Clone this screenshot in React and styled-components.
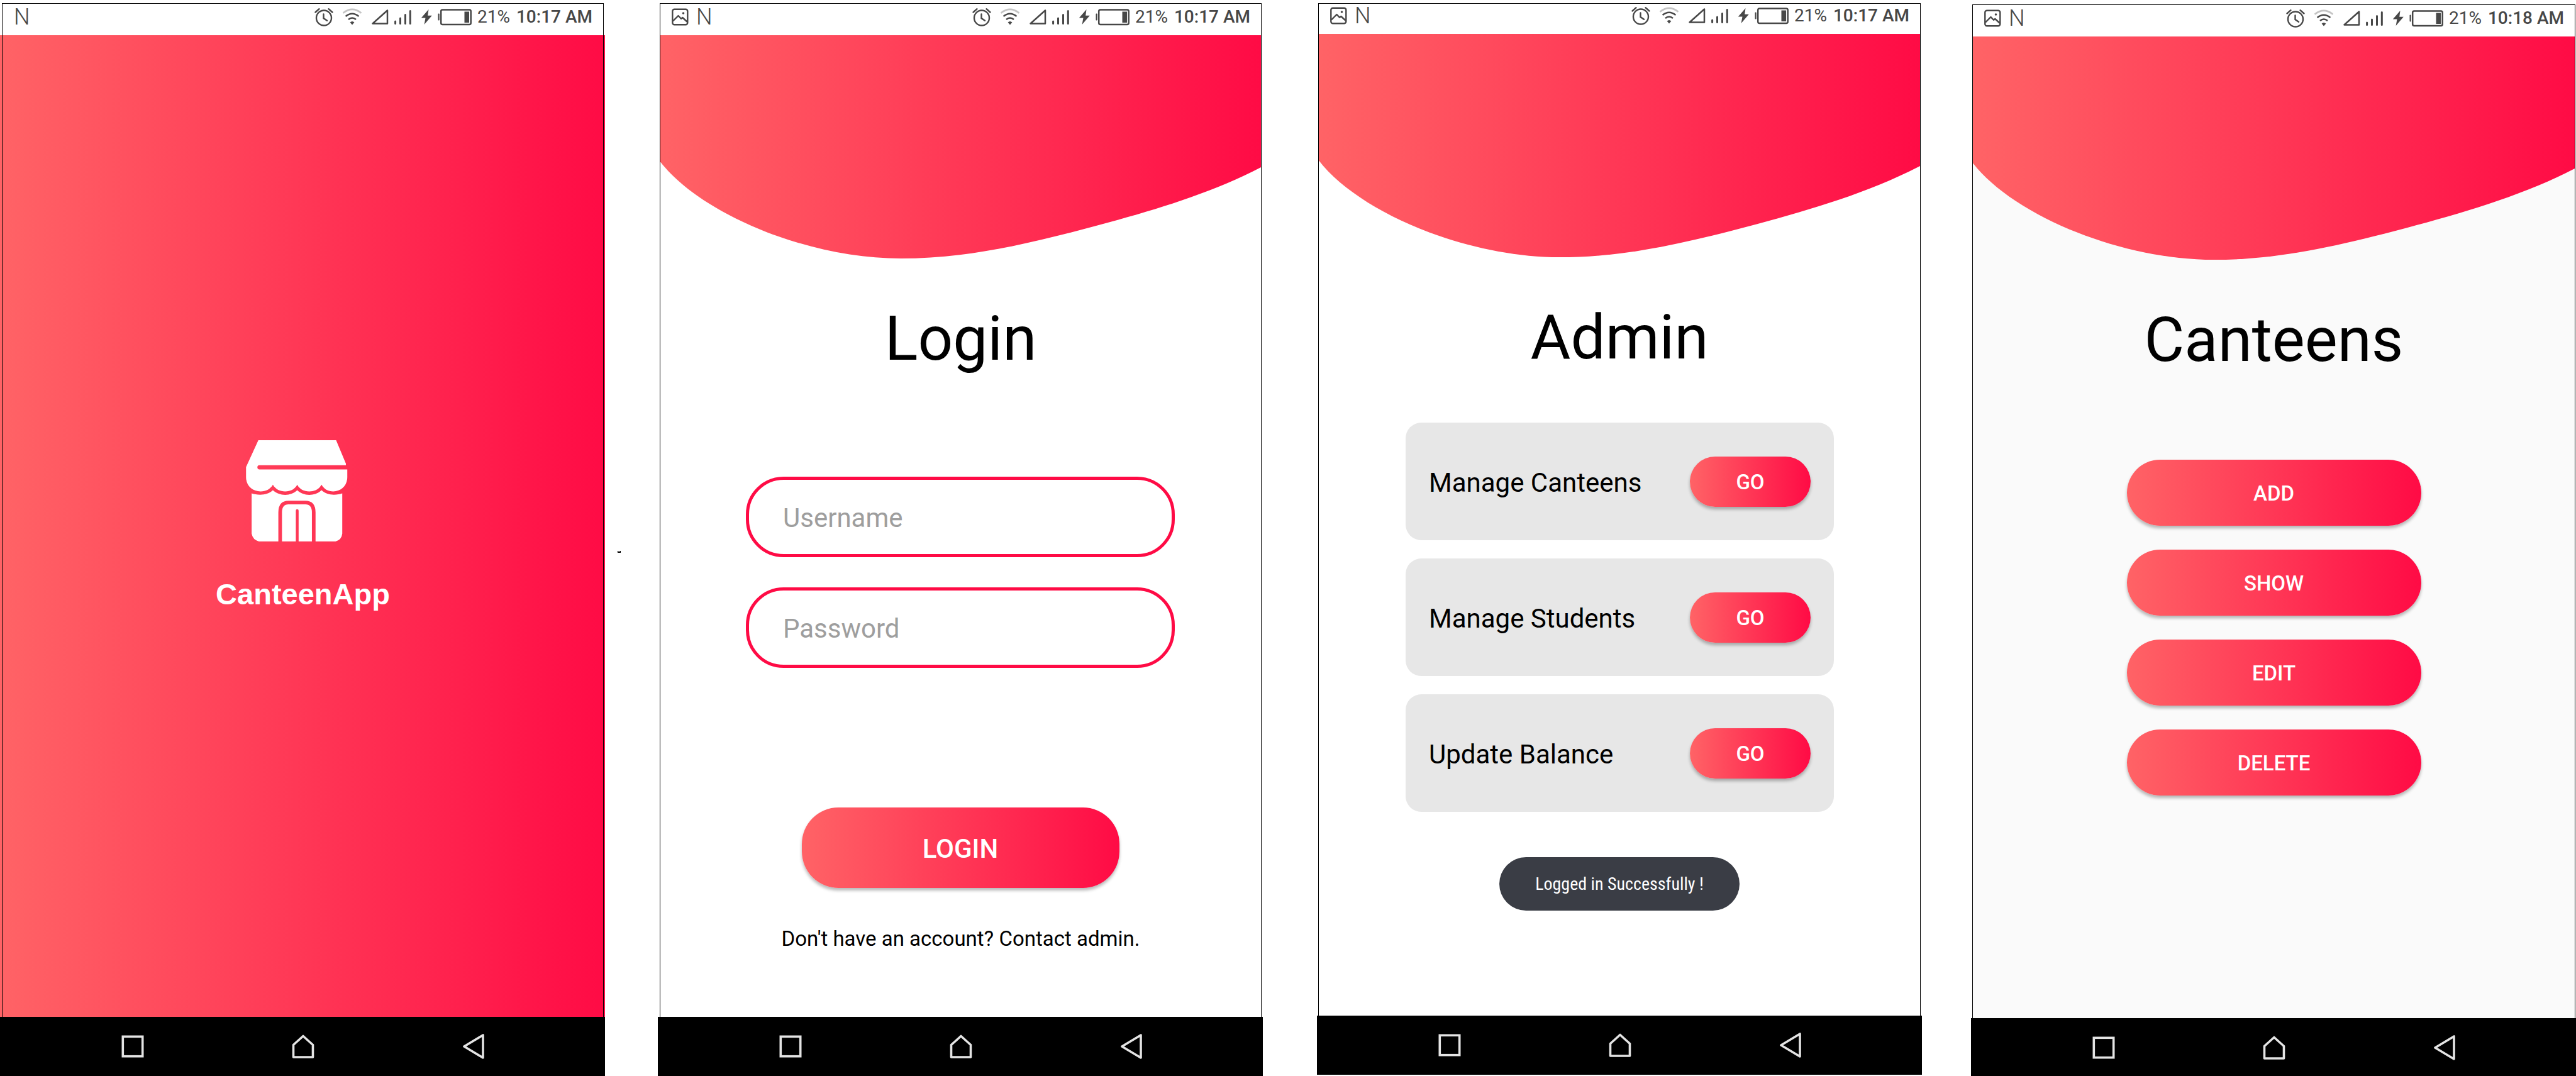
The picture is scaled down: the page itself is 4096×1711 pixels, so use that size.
import React from 'react';
import styled, { createGlobalStyle } from 'styled-components';

const coral = '#ff6366';
const crimson = '#ff0b45';
const ink = '#474747';
const brandGradient = `linear-gradient(90deg, ${coral}, ${crimson})`;

const GlobalStyle = createGlobalStyle`
  *, *::before, *::after { box-sizing: border-box; }
  body {
    margin: 0;
    background: #fff;
    font-family: Roboto, "Noto Sans", sans-serif;
    color: #000;
  }
  button, input { font-family: inherit; }
`;

const Board = styled.main`
  display: flex;
  min-height: 100vh;
`;

const Gutter = styled.div`
  flex: 0 0 ${(p) => p.$width}px;
  display: flex;
  align-items: center;
  padding: 44px 0 0 20px;
`;

const Speck = styled.span`
  width: 5px;
  height: 3px;
  border: 1px solid #000;
`;

const Phone = styled.section`
  flex: 1 1 0;
  min-width: 0;
  display: flex;
  flex-direction: column;
  padding-top: ${(p) => p.$top || 5}px;
  padding-bottom: ${(p) => p.$bottom || 0}px;
  background: ${(p) => (p.$splash ? `${brandGradient} 0 56px no-repeat` : 'none')};
`;

const Frame = styled.div`
  flex: 1;
  display: flex;
  flex-direction: column;
  margin: 0 ${(p) => p.$right || 2}px 0 ${(p) => p.$left || 3}px;
  border: 1px solid #000;
  border-bottom: 0;
`;

const StatusBar = styled.header`
  height: ${(p) => p.$height || 50}px;
  padding: 0 17px 12px 18px;
  display: flex;
  align-items: flex-end;
  justify-content: space-between;
  color: ${ink};
`;

const StatusGroup = styled.div`
  display: flex;
  align-items: center;
  gap: ${(p) => p.$gap}px;
  height: 34px;
  svg { display: block; flex: none; }
`;

const Carrier = styled.span`
  font-size: 36px;
  font-weight: 300;
  line-height: 34px;
`;

const StatusText = styled.span`
  font-size: 28px;
  line-height: 34px;
  font-weight: ${(p) => (p.$strong ? 500 : 400)};
`;

const Screen = styled.div`
  flex: 1;
  display: flex;
  flex-direction: column;
  align-items: center;
  background: ${(p) => p.$background || 'transparent'};
`;

const SplashBody = styled(Screen)`
  justify-content: center;
  gap: 56px;
`;

const BrandName = styled.h1`
  margin: 0;
  font-family: "Liberation Sans", Arial, sans-serif;
  font-size: 47px;
  line-height: 56px;
  font-weight: 700;
  color: #fff;
`;

const WaveArt = styled.svg`
  display: block;
  width: 100%;
  height: 356px;
`;

const Title = styled.h1`
  margin: 69px 0 0;
  font-size: 98px;
  line-height: 116px;
  font-weight: 400;
`;

const Form = styled.form`
  align-self: stretch;
  display: flex;
  flex-direction: column;
  align-items: center;
  padding: 161px 137px 0 136px;
`;

const Fields = styled.div`
  align-self: stretch;
  display: flex;
  flex-direction: column;
  gap: 48px;
  margin-bottom: 222px;
`;

const Field = styled.input`
  width: 100%;
  height: 128px;
  padding: 3px 54px 0;
  border: 5px solid ${crimson};
  border-radius: 60px;
  background: #fff;
  font-size: 42px;
  color: #000;
  outline: none;
  &::placeholder { color: #9e9e9e; opacity: 1; }
`;

const GradientButton = styled.button`
  display: block;
  flex: none;
  width: ${(p) => p.$width}px;
  height: ${(p) => p.$height}px;
  padding: 2px 0 0;
  border: 0;
  border-radius: 58px;
  background: ${brandGradient};
  box-shadow: 0 4px 5px rgba(0, 0, 0, 0.28);
  color: #fff;
  font-size: ${(p) => (p.$large ? 42 : 33)}px;
  font-weight: 500;
`;

const Note = styled.p`
  margin: 61px 0 0;
  font-size: 33px;
  line-height: 40px;
`;

const CardList = styled.ul`
  align-self: stretch;
  display: flex;
  flex-direction: column;
  gap: 29px;
  margin: 77px 0 72px;
  padding: 0 137px 0 138px;
  list-style: none;
`;

const Card = styled.li`
  display: flex;
  align-items: center;
  justify-content: space-between;
  height: 187px;
  padding: 0 37px;
  border-radius: 25px;
  background: #e7e7e7;
  font-size: 42px;
`;

const CardLabel = styled.span`
  padding-top: 4px;
`;

const Toast = styled.div`
  width: 382px;
  height: 85px;
  border-radius: 43px;
  background: #3a3d45;
  color: #fff;
  font-family: "Roboto Condensed", Roboto, sans-serif;
  font-size: 28px;
  line-height: 86px;
  text-align: center;
`;

const Actions = styled.div`
  display: flex;
  flex-direction: column;
  gap: 38px;
  margin-top: 132px;
`;

const NavBar = styled.nav`
  height: ${(p) => p.$height || 94}px;
  display: flex;
  padding: 0 74px 0 76px;
  background: #000;
`;

const NavButton = styled.button`
  flex: 1;
  height: 94px;
  padding: 0;
  border: 0;
  background: none;
  display: flex;
  align-items: center;
  justify-content: center;
  svg { display: block; }
`;

const PictureIcon = () => (
  <svg width="27" height="28" viewBox="0 0 27 28" fill="none" stroke={ink} strokeWidth="2.4" strokeLinejoin="round">
    <rect x="1.3" y="1.8" width="24" height="24.4" rx="3" />
    <path d="M2 20.500 10.5 12 15 16.800 17.3 15 25 22" />
    <circle cx="18.5" cy="8" r="1.8" fill={ink} stroke="none" />
  </svg>
);

const AlarmIcon = () => (
  <svg width="30" height="28" viewBox="0 0 30 28" fill="none" stroke={ink} strokeWidth="2.4" strokeLinecap="round" overflow="visible">
    <circle cx="15" cy="15.5" r="12" />
    <path d="M14.5 9.500v6.500l5.500 3.800M1.5 6.500 7.500 1.2M28.5 6.500 22.500 1.2" />
  </svg>
);

const WifiIcon = () => (
  <svg width="30" height="28" viewBox="0 0 30 28" fill="none" stroke={ink} strokeWidth="2.500">
    <path d="M.5 7.800Q15 -4 29.500 7.800" stroke="#c4c4c4" />
    <path d="M4.600 13Q15 4.500 25.400 13M9 18Q15 13 21 18" />
    <path d="M15 26.5 11.6 22.500Q15 19.500 18.400 22.500z" fill={ink} stroke="none" />
  </svg>
);

const SignalIcon = () => (
  <svg width="64" height="28" viewBox="0 0 64 28" fill="none" stroke={ink}>
    <path d="M2.5 24.5H26V3.5z" strokeWidth="2.500" strokeLinejoin="round" />
    <path d="M38.6 21v3.500M46.5 16v8.500M54.5 10.5v14M62.3 4.5v20" strokeWidth="3" strokeLinecap="round" />
  </svg>
);

const PowerIcon = () => (
  <svg width="81" height="28" viewBox="0 0 81 28">
    <path d="M12.5 2 .8 15.6H7.500L5.6 26 17.8 11.800H11.2z" fill={ink} />
    <rect x="27.5" y="8.5" width="2.2" height="11" rx="1" fill={ink} />
    <rect x="32.2" y="2.500" width="47.500" height="23.500" rx="2.5" fill="none" stroke={ink} strokeWidth="2.500" />
    <rect x="69.500" y="5.5" width="7.500" height="17.500" fill={ink} />
  </svg>
);

const StoreIcon = () => (
  <svg width="181" height="161" viewBox="0 0 203 181" aria-hidden="true">
    <defs>
      <mask id="doorway">
        <rect width="203" height="181" fill="#fff" />
        <path d="M61 183V129Q61 111.500 76 111.500H106Q121 111.500 121 129V183" fill="none" stroke="#000" strokeWidth="6.500" />
        <path d="M91.500 183V126" stroke="#000" strokeWidth="5" strokeLinecap="round" />
      </mask>
    </defs>
    <path
      fill="#fff"
      d="M22 0H161L178.500 42V44.700H24A3.700 3.700 0 0 0 24 52.200H181V66C181 82 169 91.500 156 91.500C147 91.500 140 88 135 79.500C130 88 122 91.500 113 91.500C104 91.500 96 88 91.500 79.500C87 88 79 91.500 70 91.500C61 91.500 53 88 48 79.500C43 88 35 91.500 26 91.500C12 91.500 0 82 0 66V48Z"
    />
    <path
      fill="#fff"
      mask="url(#doorway)"
      d="M10 95C20 98.500 38 99.500 48 89.500C60 100.500 80 100.500 91.500 89.500C103 100.500 123 100.500 135 89.500C145 99.500 162 98.500 172 95V167Q171 178 160 181H23Q12 178 10 167Z"
    />
  </svg>
);

const SquareIcon = () => (
  <svg width="36" height="40" viewBox="0 0 36 40" fill="none" stroke="#e4e4e4" strokeWidth="3.600">
    <rect x="2.300" y="4.300" width="31.400" height="31.400" />
  </svg>
);

const HomeIcon = () => (
  <svg width="36" height="40" viewBox="0 0 36 40" fill="none" stroke="#e4e4e4" strokeWidth="3.600" strokeLinejoin="round">
    <path d="M2.500 37V17.500L18 3.500 33.500 17.500V37z" />
  </svg>
);

const BackIcon = () => (
  <svg width="36" height="40" viewBox="0 0 36 40" fill="none" stroke="#e4e4e4" strokeWidth="3.600" strokeLinejoin="round">
    <path d="M33 2V38L3 20z" />
  </svg>
);

const Wave = ({ id }) => (
  <WaveArt viewBox="0 0 1074 400" preserveAspectRatio="none" aria-hidden="true">
    <defs>
      <linearGradient id={id}>
        <stop offset="0" stopColor={coral} />
        <stop offset="1" stopColor={crimson} />
      </linearGradient>
    </defs>
    <path
      fill={`url(#${id})`}
      d="M0 0H1074V236C970 290 850 322 736 352C622 381 530 399 430 399C260 399 70 317 0 226Z"
    />
  </WaveArt>
);

const Status = ({ time, height, picture }) => (
  <StatusBar $height={height}>
    <StatusGroup $gap={12}>
      {picture && <PictureIcon />}
      <Carrier>N</Carrier>
    </StatusGroup>
    <StatusGroup $gap={9}>
      <StatusGroup $gap={15}>
        <AlarmIcon />
        <WifiIcon />
        <SignalIcon />
        <PowerIcon />
      </StatusGroup>
      <StatusGroup $gap={10}>
        <StatusText>21%</StatusText>
        <StatusText $strong>{time}</StatusText>
      </StatusGroup>
    </StatusGroup>
  </StatusBar>
);

const Navigation = ({ height }) => (
  <NavBar $height={height}>
    <NavButton type="button" aria-label="Recent apps"><SquareIcon /></NavButton>
    <NavButton type="button" aria-label="Home"><HomeIcon /></NavButton>
    <NavButton type="button" aria-label="Back"><BackIcon /></NavButton>
  </NavBar>
);

const tasks = ['Manage Canteens', 'Manage Students', 'Update Balance'];
const actions = ['ADD', 'SHOW', 'EDIT', 'DELETE'];

export default function App() {
  return (
    <>
      <GlobalStyle />
      <Board>
        <Phone $splash>
          <Frame>
            <Status time="10:17 AM" />
            <SplashBody>
              <StoreIcon />
              <BrandName>CanteenApp</BrandName>
            </SplashBody>
          </Frame>
          <Navigation />
        </Phone>

        <Gutter $width={84}><Speck /></Gutter>

        <Phone>
          <Frame>
            <Status time="10:17 AM" picture />
            <Screen>
              <Wave id="wave-login" />
              <Title>Login</Title>
              <Form onSubmit={(e) => e.preventDefault()}>
                <Fields>
                  <Field type="text" placeholder="Username" aria-label="Username" />
                  <Field type="password" placeholder="Password" aria-label="Password" />
                </Fields>
                <GradientButton type="submit" $width={505} $height={128} $large>LOGIN</GradientButton>
              </Form>
              <Note>Don't have an account? Contact admin.</Note>
            </Screen>
          </Frame>
          <Navigation />
        </Phone>

        <Gutter $width={86} />

        <Phone $bottom={2}>
          <Frame $left={2}>
            <Status time="10:17 AM" height={48} picture />
            <Screen>
              <Wave id="wave-admin" />
              <Title>Admin</Title>
              <CardList>
                {tasks.map((task) => (
                  <Card key={task}>
                    <CardLabel>{task}</CardLabel>
                    <GradientButton type="button" $width={192} $height={80} aria-label={`GO: ${task}`}>GO</GradientButton>
                  </Card>
                ))}
              </CardList>
              <Toast role="status">Logged in Successfully !</Toast>
            </Screen>
          </Frame>
          <Navigation />
        </Phone>

        <Gutter $width={78} />

        <Phone $top={7}>
          <Frame $left={2} $right={1}>
            <Status time="10:18 AM" picture />
            <Screen $background="#fafafa">
              <Wave id="wave-canteens" />
              <Title>Canteens</Title>
              <Actions>
                {actions.map((action) => (
                  <GradientButton key={action} type="button" $width={468} $height={105}>{action}</GradientButton>
                ))}
              </Actions>
            </Screen>
          </Frame>
          <Navigation height={92} />
        </Phone>
      </Board>
    </>
  );
}
